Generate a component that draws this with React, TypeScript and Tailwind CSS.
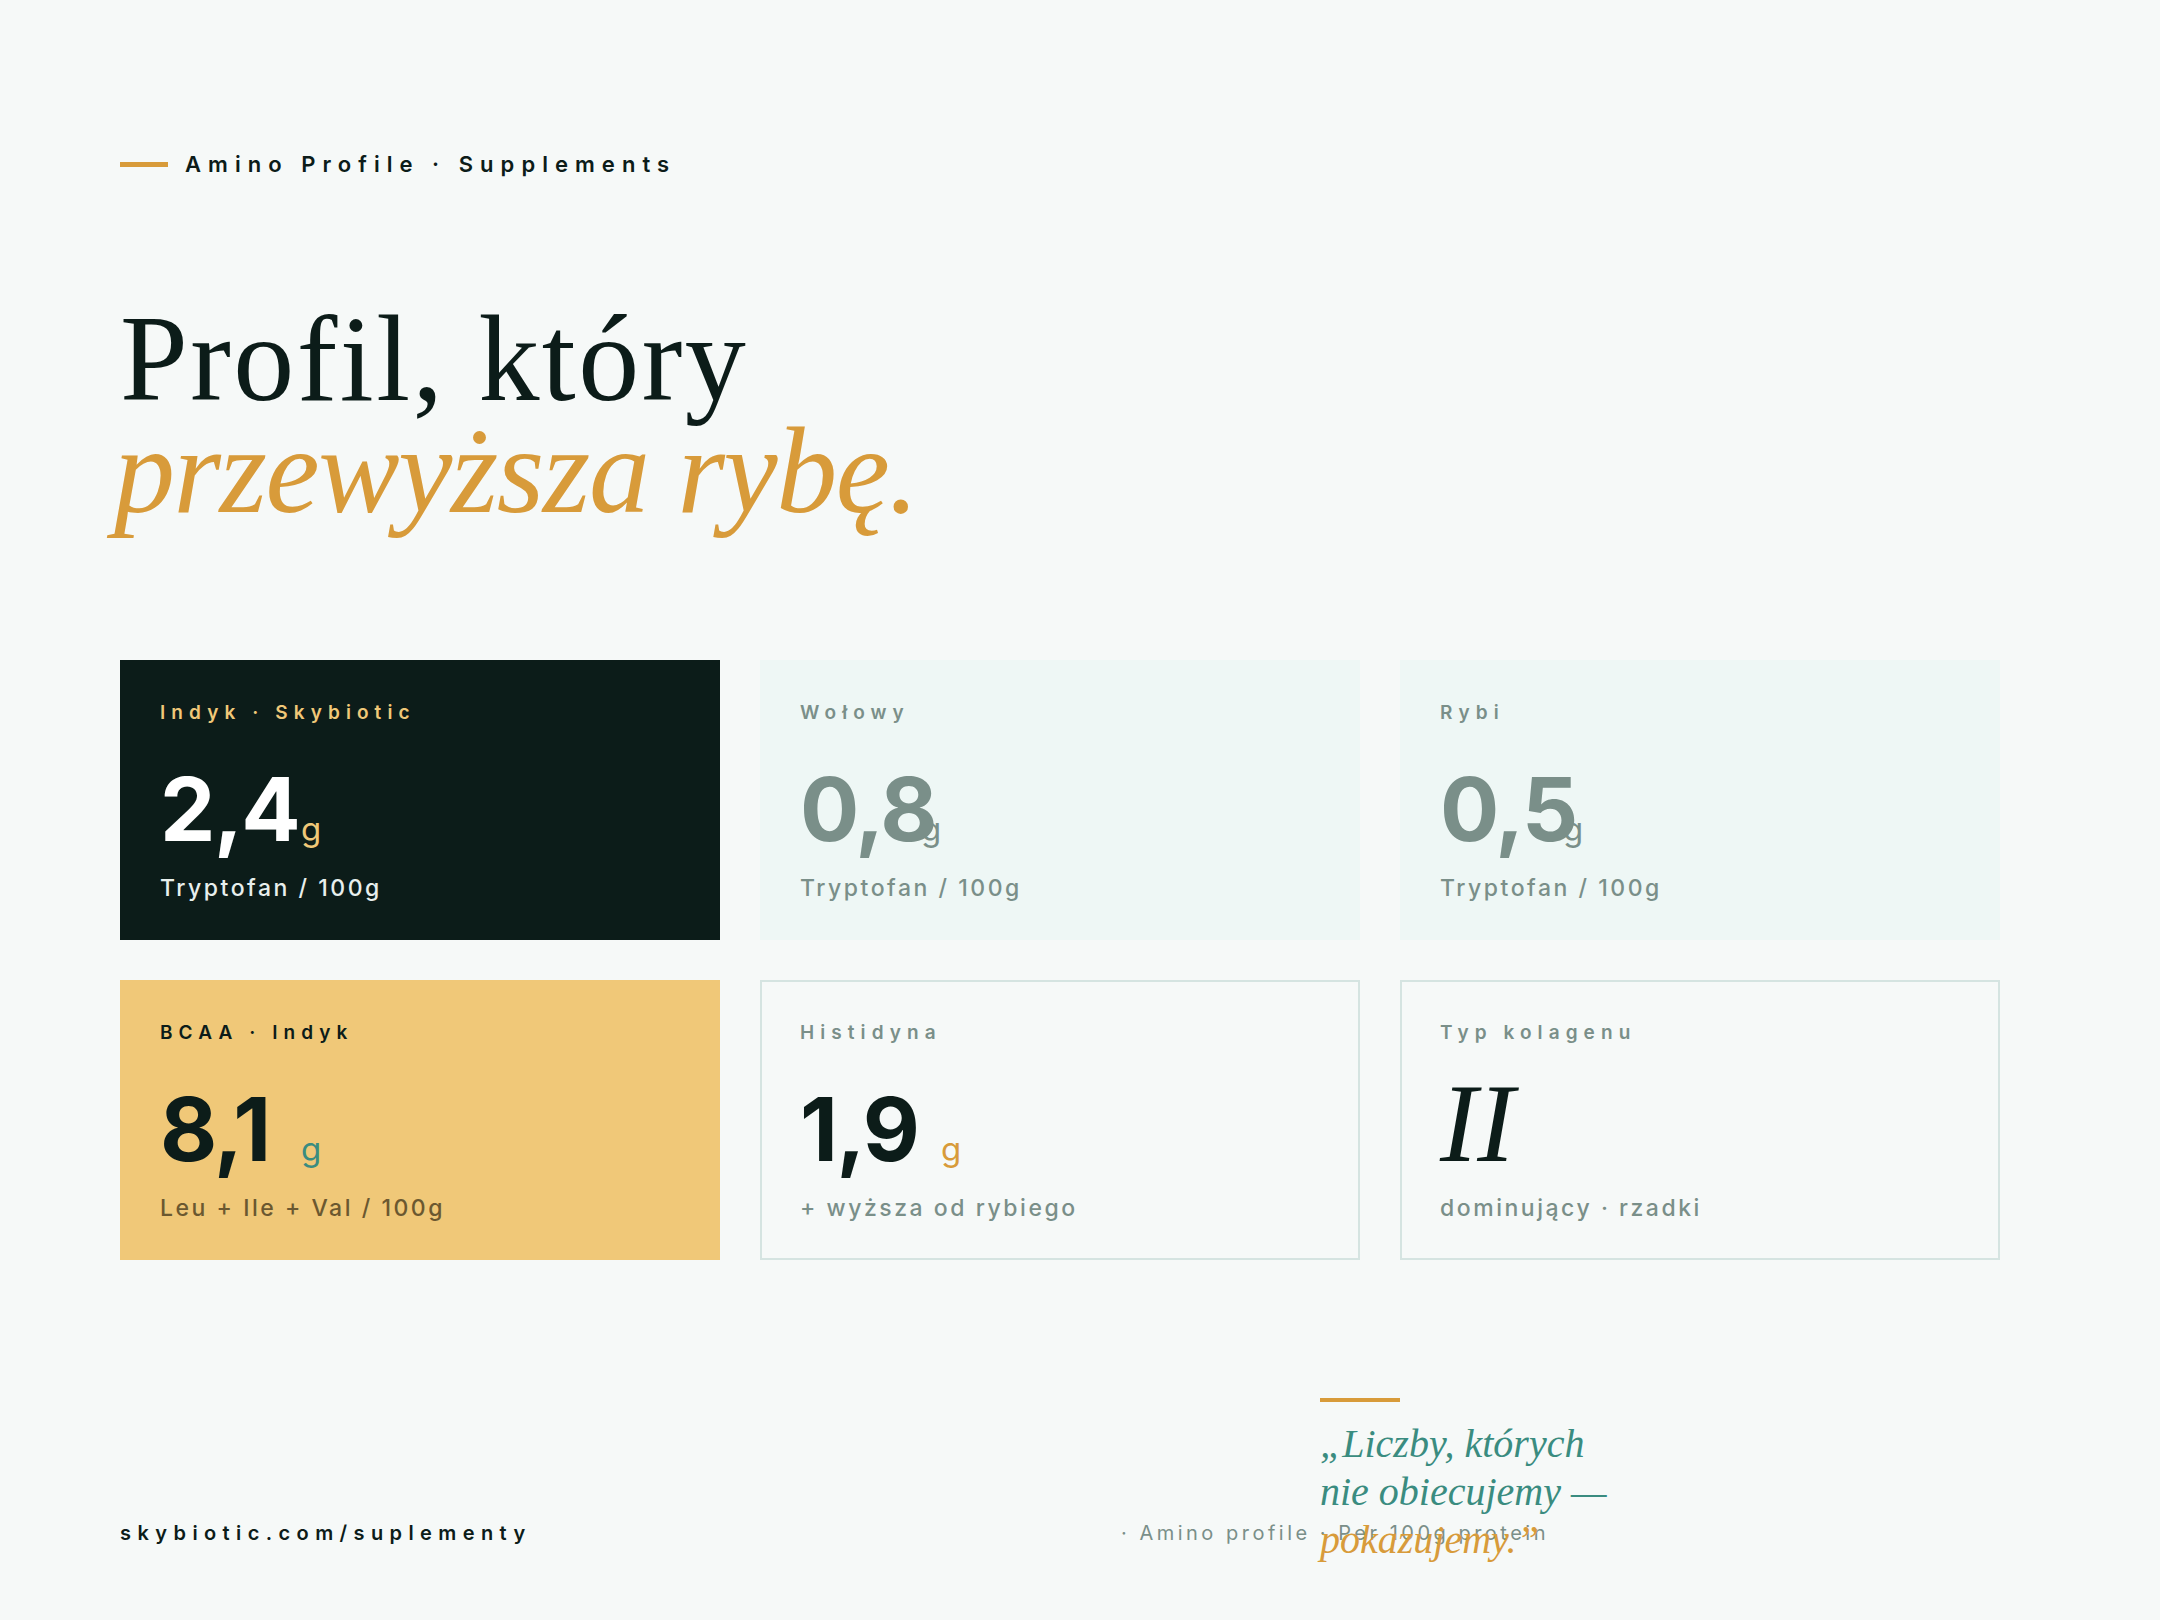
import React from "react";

type Card = {
  label: string;
  value: string;
  unit?: string;
  sub: string;
  box: string;
  labelCls: string;
  valueCls: string;
  unitCls: string;
  subCls: string;
  valueW: string;
  bordered?: boolean;
  roman?: boolean;
};

const cards: Card[] = [
  {
    label: "Indyk · Skybiotic",
    value: "2,4",
    unit: "g",
    sub: "Tryptofan / 100g",
    box: "bg-[#0c1c19]",
    labelCls: "text-[#f0c878]",
    valueCls: "text-white",
    unitCls: "text-[#f0c878]",
    subCls: "text-[#e8efed]",
    valueW: "w-[141px]",
  },
  {
    label: "Wołowy",
    value: "0,8",
    unit: "g",
    sub: "Tryptofan / 100g",
    box: "bg-[#eef7f5]",
    labelCls: "text-[#7a8f89]",
    valueCls: "text-[#7a8f89]",
    unitCls: "text-[#7a8f89]",
    subCls: "text-[#7a8f89]",
    valueW: "w-[121px]",
  },
  {
    label: "Rybi",
    value: "0,5",
    unit: "g",
    sub: "Tryptofan / 100g",
    box: "bg-[#eef7f5]",
    labelCls: "text-[#7a8f89]",
    valueCls: "text-[#7a8f89]",
    unitCls: "text-[#7a8f89]",
    subCls: "text-[#7a8f89]",
    valueW: "w-[123px]",
  },
  {
    label: "BCAA · Indyk",
    value: "8,1",
    unit: "g",
    sub: "Leu + Ile + Val / 100g",
    box: "bg-[#f0c878]",
    labelCls: "text-[#0c1c19]",
    valueCls: "text-[#0c1c19]",
    unitCls: "text-[#3a8c80]",
    subCls: "text-[#6b5830]",
    valueW: "w-[141px]",
  },
  {
    label: "Histidyna",
    value: "1,9",
    unit: "g",
    sub: "+ wyższa od rybiego",
    box: "bg-[#f6f9f8] border-2 border-[#d5e4e1]",
    labelCls: "text-[#7a8f89]",
    valueCls: "text-[#0c1c19]",
    unitCls: "text-[#d89b3a]",
    subCls: "text-[#7a8f89]",
    valueW: "w-[141px]",
    bordered: true,
  },
  {
    label: "Typ kolagenu",
    value: "II",
    sub: "dominujący · rzadki",
    box: "bg-[#f6f9f8] border-2 border-[#d5e4e1]",
    labelCls: "text-[#7a8f89]",
    valueCls: "text-[#0c1c19]",
    unitCls: "",
    subCls: "text-[#7a8f89]",
    valueW: "",
    bordered: true,
    roman: true,
  },
];

const sans = "font-['Inter','Liberation_Sans',sans-serif]";
const serif = "font-['Liberation_Serif','Times_New_Roman',serif]";

function StatCard({ c }: { c: Card }) {
  return (
    <div
      className={`h-[280px] flex flex-col ${c.box} ${
        c.bordered ? "pt-[37px] px-[38px]" : "pt-[39px] px-[40px]"
      }`}
    >
      <div
        className={`${sans} text-[19px] leading-[28px] font-semibold tracking-[0.32em] whitespace-nowrap ${c.labelCls}`}
      >
        {c.label}
      </div>
      <div className="mt-[38px] h-[88px] flex items-baseline">
        {c.roman ? (
          <span
            className={`${serif} italic text-[112px] leading-[76px] ${c.valueCls}`}
          >
            {c.value}
          </span>
        ) : (
          <>
            <span
              className={`${sans} inline-block ${c.valueW} text-[88px] leading-none font-bold tracking-[-0.02em] whitespace-nowrap ${c.valueCls}`}
            >
              {c.value}
            </span>
            <span className={`${sans} text-[33px] leading-none font-normal ${c.unitCls}`}>
              {c.unit}
            </span>
          </>
        )}
      </div>
      <div
        className={`${sans} mt-[19px] text-[23px] leading-[32px] font-medium tracking-[0.11em] whitespace-nowrap ${c.subCls}`}
      >
        {c.sub}
      </div>
    </div>
  );
}

export default function App() {
  return (
    <div className="w-full min-h-[1620px] bg-[#f6f9f8] px-[120px] pt-[148px] pb-[73px]">
      {/* eyebrow */}
      <div className="flex items-center gap-[17px] h-[32px]">
        <div className="w-[48px] h-[5px] bg-[#d89b3a]" />
        <div
          className={`${sans} text-[22px] leading-[32px] font-semibold tracking-[0.32em] text-[#0c1c19] whitespace-nowrap`}
        >
          Amino Profile · Supplements
        </div>
      </div>

      {/* headline */}
      <h1 className={`${serif} mt-[123px] text-[122px] leading-[112px] font-normal`}>
        <span className="block text-[#0c1c19] tracking-[0.02em] whitespace-nowrap">
          Profil, który
        </span>
        <span className="block italic text-[#d89b3a] tracking-[-0.012em] whitespace-nowrap -ml-[6px]">
          przewyższa rybę.
        </span>
      </h1>

      {/* cards */}
      <div className="mt-[133px] grid grid-cols-[repeat(3,600px)] gap-[40px]">
        {cards.map((c) => (
          <StatCard key={c.label} c={c} />
        ))}
      </div>

      {/* footer */}
      <div className="relative mt-[259px] flex items-baseline">
        <div
          className={`${sans} flex-none w-[1001px] text-[20px] leading-[28px] font-semibold tracking-[0.32em] text-[#0c1c19] whitespace-nowrap`}
        >
          skybiotic.com/suplementy
        </div>
        <div
          className={`${sans} text-[20px] leading-[28px] font-normal tracking-[0.175em] text-[#7a8f89] whitespace-nowrap`}
        >
          · Amino profile · Per 100g protein
        </div>

        <div className="absolute left-[1200px] top-[-121px]">
          <div className="w-[80px] h-[4px] bg-[#d89b3a]" />
          <p
            className={`${serif} mt-[18px] italic text-[40px] leading-[48px] text-[#3a8c80] whitespace-nowrap`}
          >
            „Liczby, których
            <br />
            nie obiecujemy —
            <br />
            <span className="text-[#d89b3a]">pokazujemy.”</span>
          </p>
        </div>
      </div>
    </div>
  );
}
